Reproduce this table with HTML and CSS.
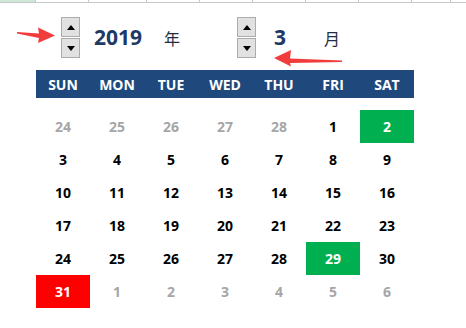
FILE: index.html
```html
<!DOCTYPE html>
<html>
<head>
<meta charset="utf-8">
<link rel="stylesheet" href="styles.css">
</head>
<body>
<div class="page">
  <div class="strip">
    <div class="sc sc-a"></div>
    <div class="sc" style="width:52px"></div>
    <div class="sc" style="width:57px"></div>
    <div class="sc" style="width:52px"></div>
    <div class="sc" style="width:52px"></div>
    <div class="sc" style="width:52px"></div>
    <div class="sc" style="width:52px"></div>
    <div class="sc" style="width:52px"></div>
    <div class="sc" style="width:38px"></div>
  </div>

  <div class="controls">
    <div class="spin spin-year">
      <div class="btn"><span class="tri up"></span></div>
      <div class="btn"><span class="tri down"></span></div>
    </div>
    <div class="num num-year">2019</div>
    <div class="unit unit-year">年</div>
    <div class="spin spin-month">
      <div class="btn"><span class="tri up"></span></div>
      <div class="btn"><span class="tri down"></span></div>
    </div>
    <div class="num num-month">3</div>
    <div class="unit unit-month">月</div>
  </div>

  <div class="cal">
    <div class="head">
      <div>SUN</div><div>MON</div><div>TUE</div><div>WED</div><div>THU</div><div>FRI</div><div>SAT</div>
    </div>
    <div class="days">
      <div class="o">24</div><div class="o">25</div><div class="o">26</div><div class="o">27</div><div class="o">28</div><div>1</div><div class="g">2</div>
      <div>3</div><div>4</div><div>5</div><div>6</div><div>7</div><div>8</div><div>9</div>
      <div>10</div><div>11</div><div>12</div><div>13</div><div>14</div><div>15</div><div>16</div>
      <div>17</div><div>18</div><div>19</div><div>20</div><div>21</div><div>22</div><div>23</div>
      <div>24</div><div>25</div><div>26</div><div>27</div><div>28</div><div class="g">29</div><div>30</div>
      <div class="r">31</div><div class="o">1</div><div class="o">2</div><div class="o">3</div><div class="o">4</div><div class="o">5</div><div class="o">6</div>
    </div>
  </div>

  <svg class="arrows" width="466" height="328" viewBox="0 0 466 328">
    <polygon points="17,32 39,33.5 38,27.5 55,35.5 38,43 39,38 17,33.5" fill="#f23b3b"/>
    <polygon points="342,60.5 290,58.5 291,50 274,58 291,66.5 290,63 342,62" fill="#f23b3b"/>
  </svg>
</div>
</body>
</html>
```

FILE: styles.css
```css
html, body {
  margin: 0;
  padding: 0;
  background: #ffffff;
}
.page {
  position: relative;
  width: 466px;
  height: 328px;
  overflow: hidden;
  font-family: "Open Sans", "Noto Sans", sans-serif;
}
.strip {
  display: flex;
  height: 2px;
  border-bottom: 1px solid #c8c8c8;
}
.sc {
  height: 2px;
  border-right: 1px solid #c8c8c8;
  flex: none;
}
.sc-a {
  width: 35px;
  background: #cfe9d9;
}
.controls {
  display: flex;
  align-items: center;
  height: 41px;
  margin-top: 14px;
  padding-left: 61px;
}
.spin {
  display: flex;
  flex-direction: column;
  gap: 1px;
  width: 19px;
  flex: none;
}
.btn {
  box-sizing: border-box;
  height: 20px;
  width: 19px;
  border: 1px solid #acacac;
  background: #e1e1e1;
  display: flex;
  align-items: center;
  justify-content: center;
}
.tri {
  width: 0;
  height: 0;
  border-left: 4px solid transparent;
  border-right: 4px solid transparent;
}
.tri.up { border-bottom: 5px solid #000; }
.tri.down { border-top: 5px solid #000; }
.num {
  font-weight: 700;
  font-size: 21px;
  color: #1f3864;
  line-height: 1;
}
.num-year { margin-left: 14px; }
.unit {
  font-family: "Noto Sans CJK SC", sans-serif;
  font-size: 16px;
  color: #1f2d45;
  line-height: 1;
}
.unit-year { margin-left: 22px; }
.spin-month { margin-left: 57px; }
.num-month { margin-left: 18px; }
.unit-month { margin-left: 38px; }
.cal {
  margin-top: 12px;
  margin-left: 36px;
  width: 378px;
}
.head {
  display: grid;
  grid-template-columns: repeat(7, 54px);
  height: 28px;
  background: #1f497d;
  color: #ffffff;
  font-weight: 700;
  font-size: 14px;
}
.head div, .days div {
  display: flex;
  align-items: center;
  justify-content: center;
}
.days {
  display: grid;
  grid-template-columns: repeat(7, 54px);
  grid-auto-rows: 33px;
  margin-top: 12px;
  font-weight: 700;
  font-size: 14px;
  color: #000000;
}
.days .o { color: #a6a6a6; }
.days .g { background: #00b050; color: #ffffff; }
.days .r { background: #ff0000; color: #ffffff; }
.arrows {
  position: absolute;
  left: 0;
  top: 0;
  pointer-events: none;
}
```
